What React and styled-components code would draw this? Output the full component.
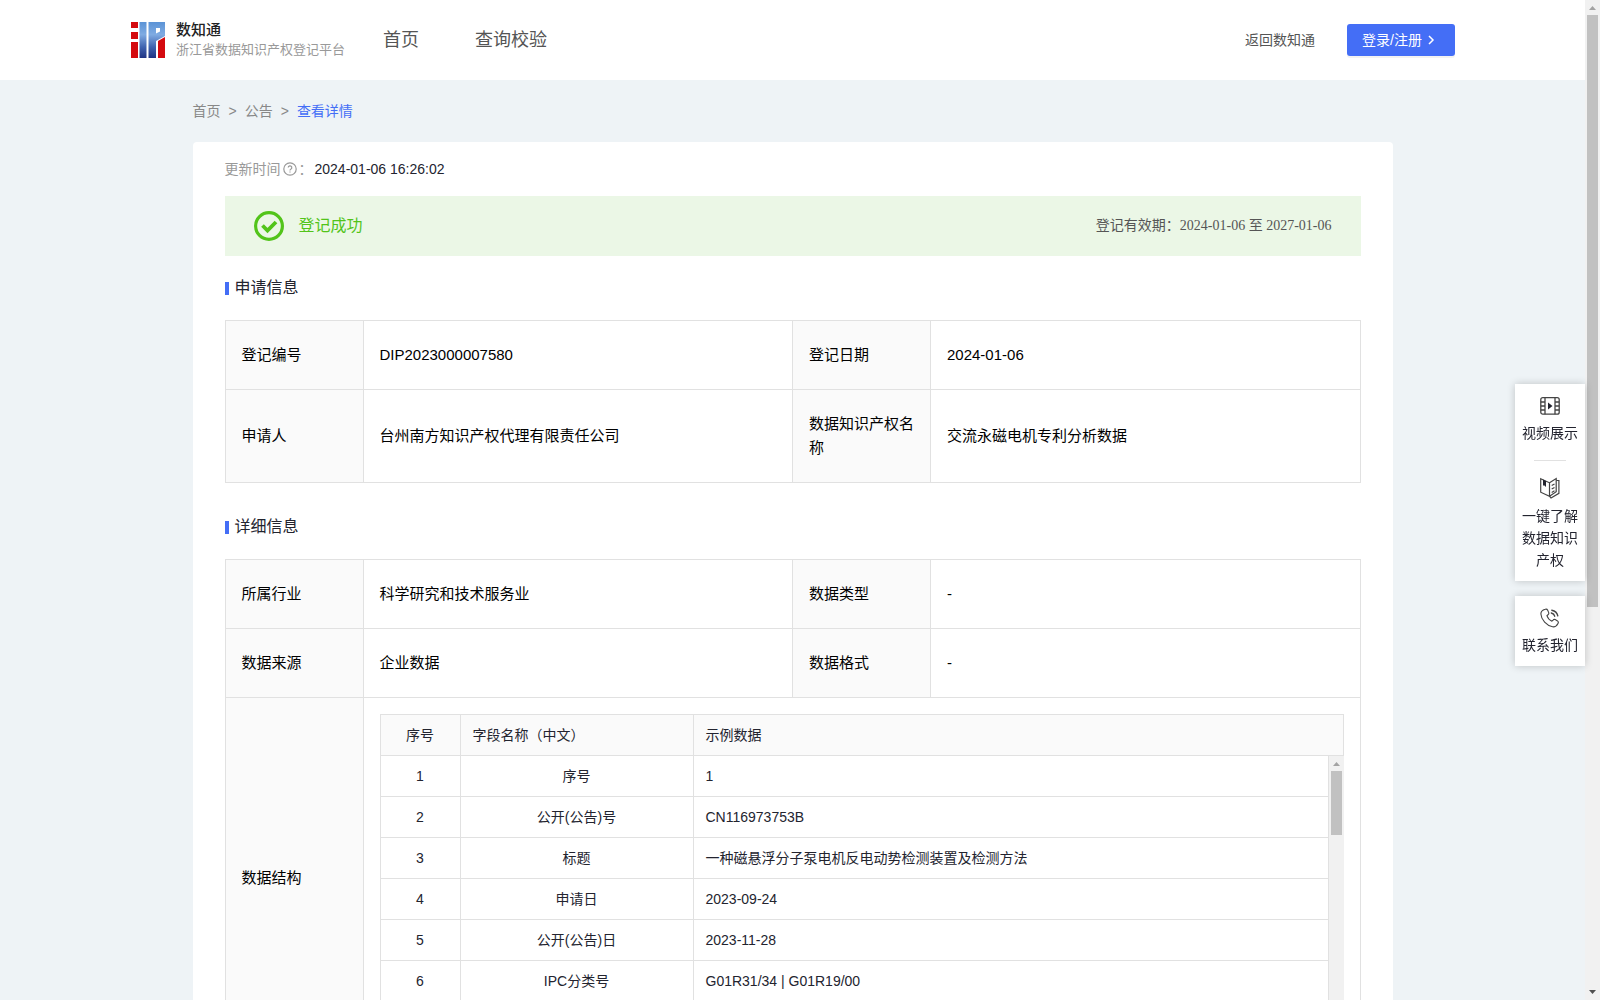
import styled, { createGlobalStyle, css } from 'styled-components'

const GlobalStyle = createGlobalStyle`
    * {
        box-sizing: border-box;
    }

    body {
        margin: 0;
        background: #eef3f6;
        color: #23242f;
        font-family: "Liberation Sans", "Noto Sans CJK SC", sans-serif;
        font-size: 14px;
        line-height: 22px;
    }

    a {
        color: inherit;
        text-decoration: none;
    }

    svg {
        display: block;
        flex-shrink: 0;
    }
`

const Janela = styled.div`
    display: flex;
    height: 100vh;
    overflow: hidden;
`

const Pagina = styled.div`
    flex: 1;
    min-width: 0;
    height: 100%;
    overflow-y: auto;
    scrollbar-width: none;
`

const Cabecalho = styled.header`
    display: flex;
    align-items: center;
    height: 80px;
    padding: 0 130px;
    background: #fff;
`

const Marca = styled.a`
    display: flex;
    align-items: center;
    gap: 10px;
`

const MarcaNome = styled.strong`
    display: block;
    color: #222;
    font-size: 15px;
    font-weight: 500;
    line-height: 20px;
`

const MarcaSubtitulo = styled.span`
    display: block;
    color: #999;
    font-size: 13px;
    line-height: 20px;
`

const Menu = styled.nav`
    display: flex;
    gap: 56px;
    margin-left: 38px;
    color: #555;
    font-size: 18px;
`

const Acoes = styled.div`
    display: flex;
    align-items: center;
    gap: 32px;
    margin-left: auto;
    color: #555;
`

const BotaoLogin = styled.button`
    display: flex;
    align-items: center;
    gap: 2px;
    width: 108px;
    height: 32px;
    padding: 0 15px;
    border: 0;
    border-radius: 3px;
    background: #446ef6;
    box-shadow: 0 2px 0 rgba(0, 0, 0, 0.05);
    color: #fff;
    font: inherit;
    white-space: nowrap;
    cursor: pointer;
`

const Conteudo = styled.main`
    max-width: 1200px;
    margin: 0 auto;
    padding-bottom: 40px;
`

const Trilha = styled.nav`
    display: flex;
    gap: 8px;
    padding: 20px 0;
    color: #888;
`

const TrilhaAtual = styled.span`
    color: #446ef6;
`

const Cartao = styled.section`
    padding: 16px 32px 32px;
    border-radius: 4px;
    background: #fff;
`

const Atualizacao = styled.div`
    display: flex;
    align-items: center;
    gap: 2px;
    margin-bottom: 16px;
    color: #999;

    time {
        color: #23242f;
    }
`

const Aviso = styled.div`
    display: flex;
    align-items: center;
    gap: 15px;
    height: 60px;
    padding: 0 29px;
    background: #ebf7e6;
`

const AvisoTexto = styled.span`
    color: #52c41a;
    font-size: 16px;
`

const Validade = styled.span`
    margin-left: auto;
    color: #555;
    font-family: "Liberation Serif", "Noto Sans CJK SC", serif;
`

const Titulo = styled.h2`
    display: flex;
    align-items: center;
    gap: 6px;
    margin: ${({ $espaco }) => $espaco}px 0 20px;
    font-size: 16px;
    font-weight: 400;
    line-height: 24px;

    &::before {
        content: "";
        width: 4px;
        height: 13px;
        background: #446ef6;
    }
`

const Tabela = styled.table`
    width: 100%;
    border-collapse: collapse;
    table-layout: fixed;
    color: #000;
    font-size: 15px;
    line-height: 24px;
`

const celula = css`
    border: 1px solid #e1e1e1;
    padding: 22px 16px;
    font-weight: 400;
    text-align: left;
`

const Rotulo = styled.th`
    ${celula}
    background: #fafafa;
`

const Valor = styled.td`
    ${celula}
`

const ValorEstrutura = styled(Valor)`
    padding: 16px;
`

const TabelaDados = styled.table`
    width: 100%;
    border-collapse: separate;
    border-spacing: 0;
    table-layout: fixed;
    color: #23242f;
    font-size: 14px;
    line-height: 22px;
`

const celulaDados = css`
    height: 41px;
    padding: 0 12px;
    border: solid #e1e1e1;
    border-width: 0 1px 1px 0;
    font-weight: 400;
    text-align: ${({ $centro }) => ($centro ? 'center' : 'left')};

    &:first-child {
        border-left-width: 1px;
    }
`

const CabecalhoDados = styled.th`
    ${celulaDados}
    height: 42px;
    border-top-width: 1px;
    background: #fafafa;
`

const CelulaDados = styled.td`
    ${celulaDados}
`

const AreaRolagem = styled.div`
    display: flex;
    height: 286px;
    overflow: hidden;
`

const ListaDados = styled.div`
    flex: 1;
    min-width: 0;
`

const Trilho = styled.div`
    display: flex;
    flex-direction: column;
    align-items: center;
    flex-shrink: 0;
    width: 15px;
    height: 100%;
    background: #f1f1f1;
`

const TrilhoMeio = styled.div`
    flex: 1;
    width: 11px;
`

const Polegar = styled.div`
    height: ${({ $tamanho }) => $tamanho}%;
    background: #c1c1c1;
`

const Lateral = styled.aside`
    position: fixed;
    top: 384px;
    right: 15px;
    display: flex;
    flex-direction: column;
    gap: 15px;
    width: 70px;
`

const Bloco = styled.div`
    padding: 12px 7px 10px;
    background: #fff;
    box-shadow: 0 0 8px rgba(0, 0, 0, 0.2);
`

const Atalho = styled.a`
    display: flex;
    flex-direction: column;
    align-items: center;
    gap: 6px;
    text-align: center;
`

const Divisor = styled.hr`
    width: 32px;
    height: 1px;
    margin: 16px auto;
    border: 0;
    background: #e1e1e1;
`

function Logo() {
    return (
        <svg width="36" height="36" viewBox="-1 0 36 36" aria-hidden="true">
            <defs>
                <linearGradient id="azul" x1="0" y1="0" x2="0" y2="36" gradientUnits="userSpaceOnUse">
                    <stop offset="0" stopColor="#5b93d6" />
                    <stop offset="0.35" stopColor="#7fabe2" />
                    <stop offset="0.7" stopColor="#3f62af" />
                    <stop offset="1" stopColor="#1f3383" />
                </linearGradient>
            </defs>
            <path d="M0 0h7v6H0zM0 10h7v7H0zM0 20h7v16H0z" fill="#d40a0f" />
            <path d="M8.500 0h7v36h-7z" fill="url(#azul)" />
            <path d="M17.500 0H34v14l-9 5v17h-7.500zM25 6v5.500l4-2V6z" fill="url(#azul)" fillRule="evenodd" />
            <path d="M27 19l7-4v21h-7z" fill="#d40a0f" />
        </svg>
    )
}

function IconeAjuda() {
    return (
        <svg width="14" height="14" viewBox="0 0 14 14" fill="none" stroke="#999" strokeWidth="1.2" aria-hidden="true">
            <circle cx="7" cy="7" r="6.2" />
            <path d="M5.2 5.6a1.8 1.8 0 1 1 2.6 1.6q-.8.4-.8 1.2M7 9.4v1.2" />
        </svg>
    )
}

function IconeSucesso() {
    return (
        <svg width="30" height="30" viewBox="0 0 30 30" fill="none" stroke="#52c41a" aria-hidden="true">
            <circle cx="15" cy="15" r="13.4" strokeWidth="3.2" />
            <path d="M8.5 14.5l5 5 8.5-8.5" strokeWidth="3.8" />
        </svg>
    )
}

function IconeVideo() {
    return (
        <svg width="20" height="20" viewBox="0 0 20 20" fill="none" stroke="#444" strokeWidth="1.3" aria-hidden="true">
            <rect x="0.8" y="1.6" width="18.4" height="16.6" rx="2" />
            <path d="M5 1.6v16.6M15 1.6v16.6M.8 6h4.2M.8 10h4.2M.8 14h4.2M15 6h4.2M15 10h4.2M15 14h4.2" />
            <path d="M8 6.5v7l4.5-3.5z" fill="#23242f" stroke="none" />
        </svg>
    )
}

function IconeLivro() {
    return (
        <svg width="20" height="22" viewBox="0 0 20 22" fill="none" stroke="#444" strokeWidth="1.2" aria-hidden="true">
            <path d="M.7 1.700L9.500 5.800v13.400L.7 15.200zM9.500 5.800L16.200 1.500v13.300L9.500 19.200" />
            <path d="M16.200 3.500h2.700v12.800L11 21l-1.500-1.800" />
            <path d="M11.700 8.600l2.800-1.600M11.700 12l2.800-1.600M11.700 15.400l2.800-1.600" />
            <path d="M3 2.600l3 1.400v6L4.500 8.400 3 8.600z" fill="#23242f" stroke="none" />
        </svg>
    )
}

function IconeTelefone() {
    return (
        <svg width="20" height="20" viewBox="0 0 20 20" fill="none" stroke="#444" strokeWidth="1.1" strokeLinecap="round" aria-hidden="true">
            <path d="M5.2 1.3C6.3.9 7.2 1.2 7.7 2.2L8.7 4.6C9 5.4 8.8 6.2 8 6.8L6.9 7.7C7.6 9.9 9.6 12.1 11.9 13.2L13 12.1C13.6 11.4 14.4 11.2 15.2 11.6L17.5 12.9C18.4 13.5 18.6 14.5 18 15.4C16.7 17.8 14.8 19.2 12.6 18.8C6.6 17.7 1.2 11.9.9 6C.8 3.7 2.7 2 5.2 1.3z" />
            <path d="M11.300 5c1.900.4 3 1.500 3.400 3.200M11.800 2.200c3.300.6 5.400 2.600 6 5.700" strokeWidth="1.4" />
        </svg>
    )
}

function Seta({ cor, paraBaixo }) {
    return (
        <svg width="15" height="15" viewBox="0 0 15 15" aria-hidden="true">
            <path d={paraBaixo ? 'M4 5h7L7.500 9z' : 'M4 10h7L7.500 6z'} fill={cor} />
        </svg>
    )
}

function BarraRolagem({ tamanho }) {
    return (
        <Trilho aria-hidden="true">
            <Seta cor="#a3a3a3" />
            <TrilhoMeio>
                <Polegar $tamanho={tamanho} />
            </TrilhoMeio>
            <Seta cor="#505050" paraBaixo />
        </Trilho>
    )
}

const campos = [
    { nome: '序号', exemplo: '1' },
    { nome: '公开(公告)号', exemplo: 'CN116973753B' },
    { nome: '标题', exemplo: '一种磁悬浮分子泵电机反电动势检测装置及检测方法' },
    { nome: '申请日', exemplo: '2023-09-24' },
    { nome: '公开(公告)日', exemplo: '2023-11-28' },
    { nome: 'IPC分类号', exemplo: 'G01R31/34 | G01R19/00' },
]

const inscricao = [
    ['登记编号', 'DIP2023000007580', '登记日期', '2024-01-06'],
    ['申请人', '台州南方知识产权代理有限责任公司', '数据知识产权名称', '交流永磁电机专利分析数据'],
]

const detalhes = [
    ['所属行业', '科学研究和技术服务业', '数据类型', '-'],
    ['数据来源', '企业数据', '数据格式', '-'],
]

const ColunaRotulo = styled.col`
    width: 138px;
`

const ColunaNumero = styled.col`
    width: 81px;
`

const ColunaNome = styled.col`
    width: 233px;
`

function TabelaInfo({ linhas, children }) {
    return (
        <Tabela>
            <colgroup>
                <ColunaRotulo />
                <col />
                <ColunaRotulo />
                <col />
            </colgroup>
            <tbody>
                {linhas.map(([rotuloA, valorA, rotuloB, valorB]) => (
                    <tr key={rotuloA}>
                        <Rotulo scope="row">{rotuloA}</Rotulo>
                        <Valor>{valorA}</Valor>
                        <Rotulo scope="row">{rotuloB}</Rotulo>
                        <Valor>{valorB}</Valor>
                    </tr>
                ))}
                {children}
            </tbody>
        </Tabela>
    )
}

function ColunasDados() {
    return (
        <colgroup>
            <ColunaNumero />
            <ColunaNome />
            <col />
        </colgroup>
    )
}

function EstruturaDados() {
    return (
        <>
            <TabelaDados>
                <ColunasDados />
                <thead>
                    <tr>
                        <CabecalhoDados $centro>序号</CabecalhoDados>
                        <CabecalhoDados>字段名称（中文）</CabecalhoDados>
                        <CabecalhoDados>示例数据</CabecalhoDados>
                    </tr>
                </thead>
            </TabelaDados>
            <AreaRolagem>
                <ListaDados>
                    <TabelaDados>
                        <ColunasDados />
                        <tbody>
                            {campos.map((campo, indice) => (
                                <tr key={campo.nome}>
                                    <CelulaDados $centro>{indice + 1}</CelulaDados>
                                    <CelulaDados $centro>{campo.nome}</CelulaDados>
                                    <CelulaDados>{campo.exemplo}</CelulaDados>
                                </tr>
                            ))}
                        </tbody>
                    </TabelaDados>
                </ListaDados>
                <BarraRolagem tamanho={25} />
            </AreaRolagem>
        </>
    )
}

function App() {
    return (
        <Janela>
            <GlobalStyle />
            <Pagina>
                <Cabecalho>
                    <Marca href="#">
                        <Logo />
                        <span>
                            <MarcaNome>数知通</MarcaNome>
                            <MarcaSubtitulo>浙江省数据知识产权登记平台</MarcaSubtitulo>
                        </span>
                    </Marca>
                    <Menu>
                        <a href="#">首页</a>
                        <a href="#">查询校验</a>
                    </Menu>
                    <Acoes>
                        <a href="#">返回数知通</a>
                        <BotaoLogin type="button">
                            登录/注册
                            <svg width="14" height="14" viewBox="0 0 14 14" fill="none" stroke="#fff" strokeWidth="1.5" aria-hidden="true">
                                <path d="M5 3l4 4-4 4" />
                            </svg>
                        </BotaoLogin>
                    </Acoes>
                </Cabecalho>
                <Conteudo>
                    <Trilha>
                        <a href="#">首页</a>
                        <span>&gt;</span>
                        <a href="#">公告</a>
                        <span>&gt;</span>
                        <TrilhaAtual>查看详情</TrilhaAtual>
                    </Trilha>
                    <Cartao>
                        <Atualizacao>
                            更新时间
                            <IconeAjuda />
                            ：
                            <time>2024-01-06 16:26:02</time>
                        </Atualizacao>
                        <Aviso>
                            <IconeSucesso />
                            <AvisoTexto>登记成功</AvisoTexto>
                            <Validade>登记有效期：2024-01-06 至 2027-01-06</Validade>
                        </Aviso>
                        <Titulo $espaco={20}>申请信息</Titulo>
                        <TabelaInfo linhas={inscricao} />
                        <Titulo $espaco={32}>详细信息</Titulo>
                        <TabelaInfo linhas={detalhes}>
                            <tr>
                                <Rotulo scope="row">数据结构</Rotulo>
                                <ValorEstrutura colSpan={3}>
                                    <EstruturaDados />
                                </ValorEstrutura>
                            </tr>
                        </TabelaInfo>
                    </Cartao>
                </Conteudo>
            </Pagina>
            <BarraRolagem tamanho={61} />
            <Lateral>
                <Bloco>
                    <Atalho href="#">
                        <IconeVideo />
                        视频展示
                    </Atalho>
                    <Divisor />
                    <Atalho href="#">
                        <IconeLivro />
                        一键了解数据知识产权
                    </Atalho>
                </Bloco>
                <Bloco>
                    <Atalho href="#">
                        <IconeTelefone />
                        联系我们
                    </Atalho>
                </Bloco>
            </Lateral>
        </Janela>
    )
}

export default App
